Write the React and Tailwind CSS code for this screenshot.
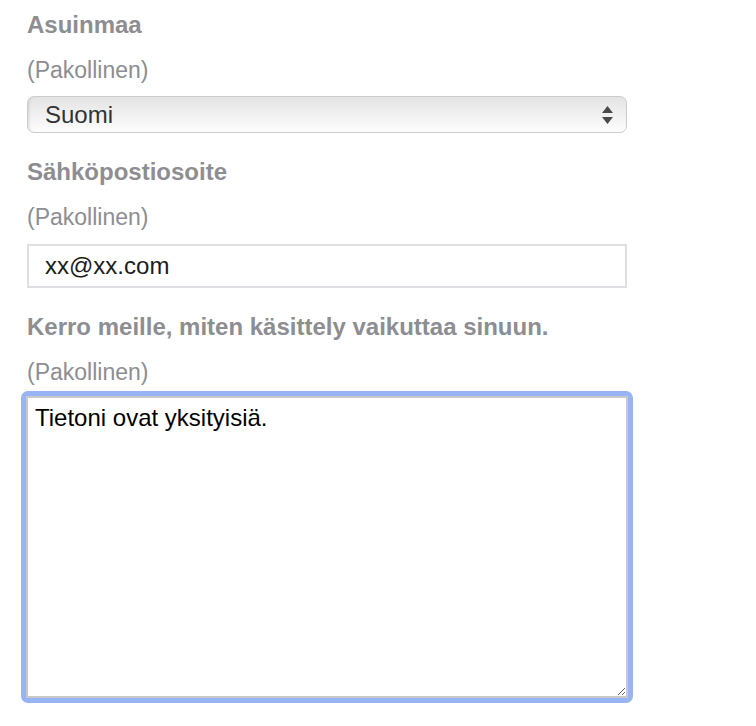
import React, { useEffect, useRef, useState } from "react";

const Label = ({ children }) => (
  <div className="text-[24px] leading-[26px] font-bold text-[#8d8d92]">{children}</div>
);

const Required = () => (
  <div className="mt-[19px] text-[23px] leading-[26px] text-[#8d8d92]">(Pakollinen)</div>
);

const App = () => {
  let [country, setCountry] = useState("Suomi");
  let [email, setEmail] = useState("xx@xx.com");
  let [text, setText] = useState("Tietoni ovat yksityisiä.");
  let areaRef = useRef(null);

  useEffect(() => {
    const el = areaRef.current;
    if (el) {
      el.focus();
      el.setSelectionRange(el.value.length, el.value.length);
    }
  }, []);

  return (
    <section
      className="min-h-[726px] w-full bg-white pl-[27px] pt-[12px]"
      style={{ fontFamily: '"Liberation Sans", Arial, sans-serif' }}
    >
      <div className="w-[600px]">
        <Label>Asuinmaa</Label>
        <Required />
        <div className="relative mt-[13px] h-[37px] rounded-[7px] border border-[#cbccd0] bg-gradient-to-b from-[#e4e4e4] to-[#fdfdfd] shadow-[inset_3px_0_3px_-2px_rgba(0,0,0,0.12)]">
          <select
            value={country}
            onChange={(e) => setCountry(e.target.value)}
            className="h-full w-full appearance-none bg-transparent pl-[17px] text-[24px] text-[#333] outline-none"
          >
            <option>Suomi</option>
            <option>Ruotsi</option>
            <option>Norja</option>
          </select>
          <svg className="pointer-events-none absolute right-[13px] top-[9px]" width="11" height="18" viewBox="0 0 11 18">
            <path d="M5.5 0 L11 7 L0 7 Z" fill="#4a4a4d" />
            <path d="M0 11 L11 11 L5.5 18 Z" fill="#4a4a4d" />
          </svg>
        </div>

        <div className="mt-[26px]">
          <Label>Sähköpostiosoite</Label>
        </div>
        <Required />
        <input
          type="text"
          value={email}
          onChange={(e) => setEmail(e.target.value)}
          className="mt-[14px] block h-[44px] w-[600px] border-2 border-[#dfdfe3] bg-white pl-[16px] text-[24px] text-[#1c1c1c] outline-none"
        />

        <div className="mt-[26px]">
          <Label>Kerro meille, miten käsittely vaikuttaa sinuun.</Label>
        </div>
        <Required />
        <div className="mt-[6px] ml-[-6px] w-[612px] rounded-[7px] border-[5px] border-[#97b5f4]">
          <textarea
            ref={areaRef}
            value={text}
            onChange={(e) => setText(e.target.value)}
            className="block h-[302px] w-full border-2 border-[#c9c9c9] bg-white px-[7px] pt-[6px] text-[24px] leading-[28px] text-black caret-black outline-none"
          />
        </div>
      </div>
    </section>
  );
};

export default App;
